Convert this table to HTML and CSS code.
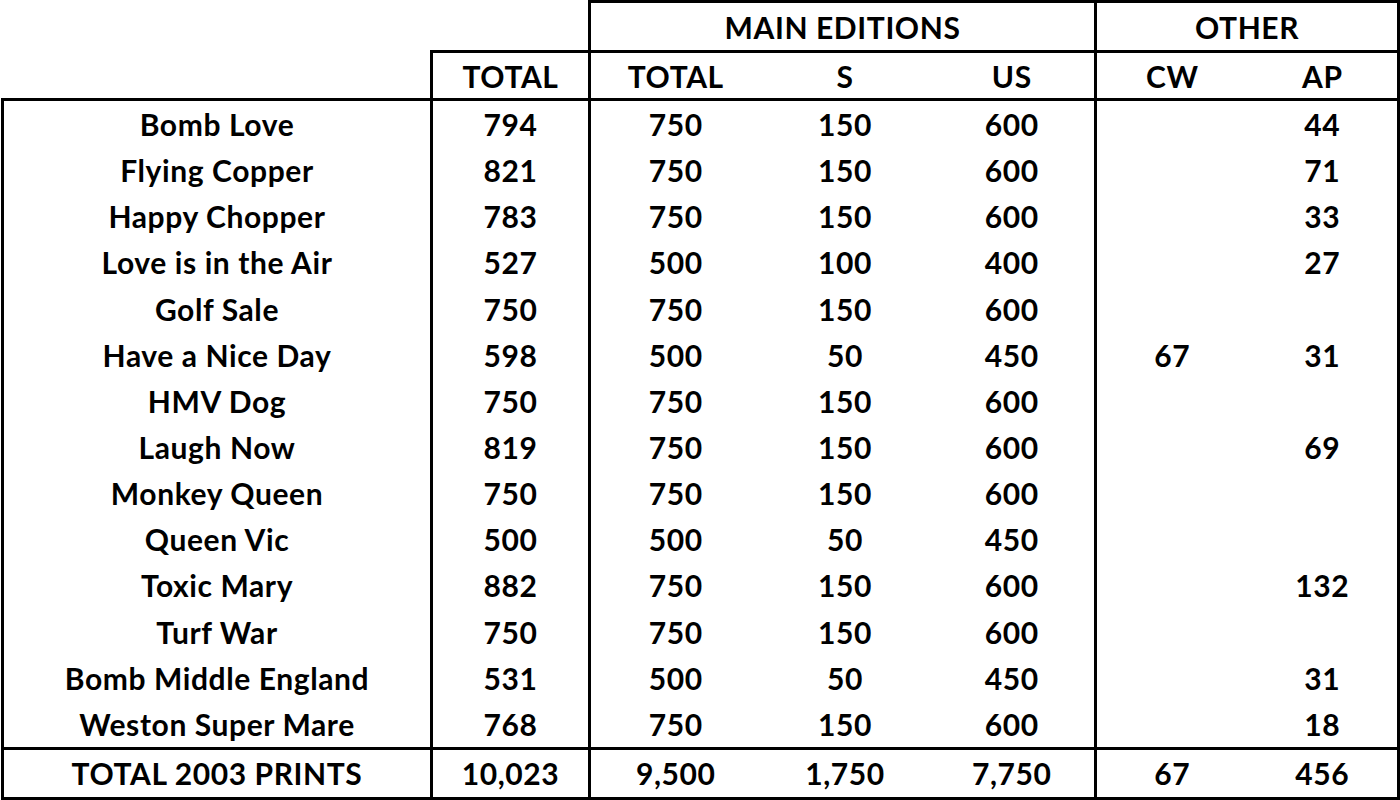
FILE: index.html
```html
<!DOCTYPE html>
<html>
<head>
<meta charset="utf-8">
<link rel="stylesheet" href="styles.css">
</head>
<body>
<table class="prints">
  <colgroup>
    <col class="c-name"><col class="c-total"><col class="c-mt"><col class="c-s"><col class="c-us"><col class="c-cw"><col class="c-ap">
  </colgroup>
  <thead>
    <tr class="group-row">
      <th class="blank" colspan="2"></th>
      <th class="group" colspan="3">MAIN EDITIONS</th>
      <th class="group" colspan="2">OTHER</th>
    </tr>
    <tr class="sub-row">
      <th class="blank"></th>
      <th class="box">TOTAL</th>
      <th class="gl">TOTAL</th>
      <th>S</th>
      <th class="gr">US</th>
      <th class="gl">CW</th>
      <th class="gr">AP</th>
    </tr>
  </thead>
  <tbody class="body">
    <tr><td>Bomb Love</td><td>794</td><td>750</td><td>150</td><td>600</td><td></td><td>44</td></tr>
    <tr><td>Flying Copper</td><td>821</td><td>750</td><td>150</td><td>600</td><td></td><td>71</td></tr>
    <tr><td>Happy Chopper</td><td>783</td><td>750</td><td>150</td><td>600</td><td></td><td>33</td></tr>
    <tr><td>Love is in the Air</td><td>527</td><td>500</td><td>100</td><td>400</td><td></td><td>27</td></tr>
    <tr><td>Golf Sale</td><td>750</td><td>750</td><td>150</td><td>600</td><td></td><td></td></tr>
    <tr><td>Have a Nice Day</td><td>598</td><td>500</td><td>50</td><td>450</td><td>67</td><td>31</td></tr>
    <tr><td>HMV Dog</td><td>750</td><td>750</td><td>150</td><td>600</td><td></td><td></td></tr>
    <tr><td>Laugh Now</td><td>819</td><td>750</td><td>150</td><td>600</td><td></td><td>69</td></tr>
    <tr><td>Monkey Queen</td><td>750</td><td>750</td><td>150</td><td>600</td><td></td><td></td></tr>
    <tr><td>Queen Vic</td><td>500</td><td>500</td><td>50</td><td>450</td><td></td><td></td></tr>
    <tr><td>Toxic Mary</td><td>882</td><td>750</td><td>150</td><td>600</td><td></td><td>132</td></tr>
    <tr><td>Turf War</td><td>750</td><td>750</td><td>150</td><td>600</td><td></td><td></td></tr>
    <tr><td>Bomb Middle England</td><td>531</td><td>500</td><td>50</td><td>450</td><td></td><td>31</td></tr>
    <tr><td>Weston Super Mare</td><td>768</td><td>750</td><td>150</td><td>600</td><td></td><td>18</td></tr>
  </tbody>
  <tfoot class="foot">
    <tr><td>TOTAL 2003 PRINTS</td><td>10,023</td><td>9,500</td><td>1,750</td><td>7,750</td><td>67</td><td>456</td></tr>
  </tfoot>
</table>
</body>
</html>
```
FILE: styles.css
```css
html, body {
  margin: 0;
  padding: 0;
  background: #ffffff;
}

.prints {
  border-collapse: collapse;
  table-layout: fixed;
  width: 1397px;
  margin-left: 1px;
  margin-top: 0;
  font-family: Lato, "Liberation Sans", sans-serif;
  font-weight: 700;
  font-size: 30px;
  letter-spacing: 0.6px;
  color: #000;
}

.c-name { width: 429px; }
.c-total { width: 158px; }
.c-mt { width: 171px; }
.c-s { width: 169px; }
.c-us { width: 166px; }
.c-cw { width: 152px; }
.c-ap { width: 151px; }

.prints th, .prints td {
  padding: 0;
  text-align: center;
  vertical-align: middle;
  font-weight: 700;
  line-height: 1;
}

.group-row th { height: 47px; }
.sub-row th { height: 45px; }

.group {
  border: 3px solid #000;
}

.blank {
  border: none;
}

.sub-row .box {
  border: 3px solid #000;
}

.sub-row .gl { border-left: 3px solid #000; }
.sub-row .gr { border-right: 3px solid #000; }
.sub-row th { border-bottom: 3px solid #000; }
.sub-row .blank { border-bottom: 3px solid #000; }

.body td {
  height: 46.15px;
}

.body td:nth-child(1),
.body td:nth-child(2),
.body td:nth-child(3),
.body td:nth-child(6) {
  border-left: 3px solid #000;
}
.body td:nth-child(7) {
  border-right: 3px solid #000;
}

.foot td {
  height: 47px;
  border-top: 3px solid #000;
  border-bottom: 3px solid #000;
}
.foot td:nth-child(1),
.foot td:nth-child(2),
.foot td:nth-child(3),
.foot td:nth-child(6) {
  border-left: 3px solid #000;
}
.foot td:nth-child(7) {
  border-right: 3px solid #000;
}
```
